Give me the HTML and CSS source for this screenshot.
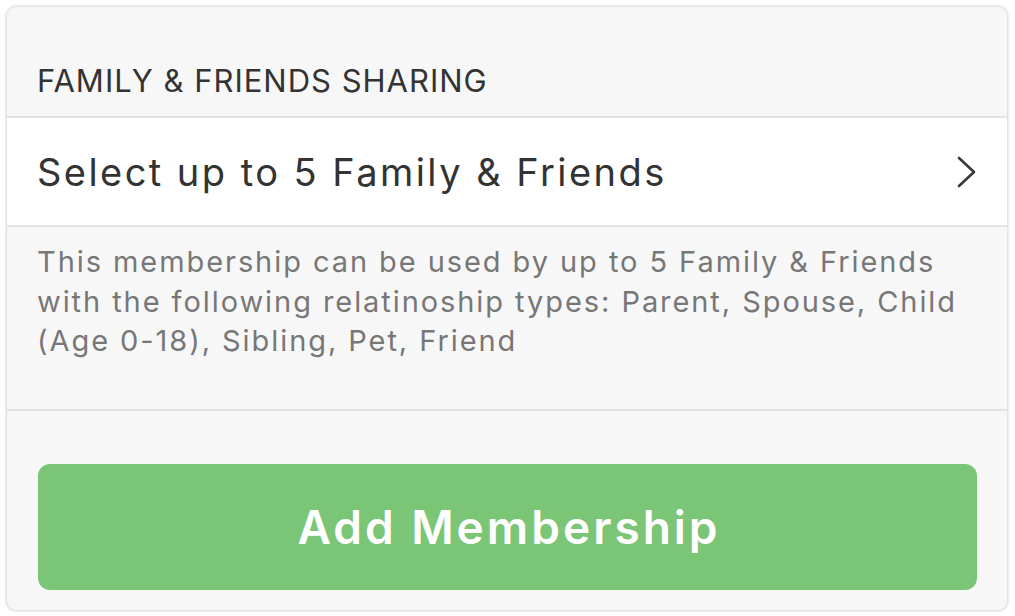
FILE: index.html
```html
<!DOCTYPE html>
<html lang="en">
<head>
    <meta charset="UTF-8">
    <title>Family &amp; Friends Sharing</title>
    <link rel="stylesheet" href="styles.css">
</head>
<body>
    <div class="card">
        <div class="section-title">FAMILY &amp; FRIENDS SHARING</div>
        <div class="select-row">
            <span>Select up to 5 Family &amp; Friends</span>
            <svg class="chevron" width="20" height="32" viewBox="0 0 20 32">
                <polyline points="2,2 17,16 2,30" fill="none" stroke="#3a3a3a" stroke-width="2.6" stroke-linecap="round" stroke-linejoin="round"/>
            </svg>
        </div>
        <p class="note">This membership can be used by up to 5 Family &amp; Friends with the following relatinoship types: Parent, Spouse, Child (Age 0-18), Sibling, Pet, Friend</p>
        <div class="actions">
            <button class="add-btn">Add Membership</button>
        </div>
    </div>
</body>
</html>
```

FILE: styles.css
```css
html, body {
    margin: 0;
    background-color: #ffffff;
}
body {
    padding: 7px 8px 6px 7px;
    font-family: Inter, "Noto Sans", sans-serif;
}
.card {
    width: 1000px;
    height: 603px;
    box-sizing: border-box;
    background-color: #f7f7f7;
    border-radius: 9px;
    box-shadow: 0 0 3px 1px rgba(0,0,0,0.18);
    overflow: hidden;
    display: flex;
    flex-direction: column;
}
.section-title {
    height: 109px;
    box-sizing: border-box;
    padding: 56px 0 0 30px;
    font-size: 31px;
    line-height: 36px;
    color: #333;
    letter-spacing: 1px;
}
.select-row {
    height: 111px;
    box-sizing: border-box;
    background-color: #fff;
    border-top: 2px solid #e3e3e3;
    border-bottom: 2px solid #e3e3e3;
    display: flex;
    align-items: center;
    justify-content: space-between;
    padding: 0 30px 0 30px;
    font-size: 38px;
    letter-spacing: 2.45px;
    color: #333;
}
.note {
    margin: 0;
    height: 184px;
    box-sizing: border-box;
    padding: 15px 30px 0 30px;
    font-size: 29px;
    line-height: 39.5px;
    letter-spacing: 1.93px;
    color: #777;
    border-bottom: 2px solid #e3e3e3;
}
.actions {
    padding: 53px 30px 0 31px;
}
.add-btn {
    width: 100%;
    height: 126px;
    border: none;
    border-radius: 12px;
    background-color: #7bc576;
    color: #fff;
    font-family: Inter, "Noto Sans", sans-serif;
    font-size: 46px;
    font-weight: 600;
    letter-spacing: 3px;
    text-indent: 3px;
    cursor: pointer;
}
```
